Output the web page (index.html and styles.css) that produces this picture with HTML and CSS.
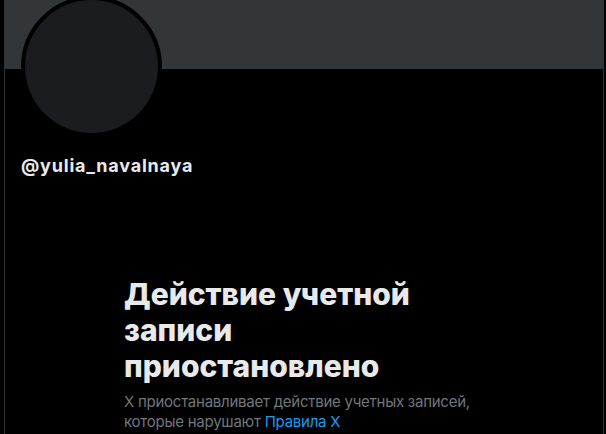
FILE: index.html
```html
<!DOCTYPE html>
<html lang="ru">
<head>
<meta charset="utf-8">
<link rel="stylesheet" href="styles.css">
</head>
<body>
<main class="column">
  <div class="banner"></div>
  <div class="profile">
    <div class="avatar"><div class="avatar-inner"></div></div>
    <div class="handle">@yulia_navalnaya</div>
  </div>
  <section class="empty">
    <h1 class="empty-title">Действие учетной записи приостановлено</h1>
    <p class="empty-text">X приостанавливает действие учетных записей, которые нарушают <a class="link" href="#">Правила X</a></p>
  </section>
</main>
</body>
</html>
```

FILE: styles.css
```css
html, body {
  margin: 0;
  padding: 0;
  background: #000;
  height: 100%;
  overflow: hidden;
}
body {
  font-family: Inter, "Noto Sans", "Liberation Sans", sans-serif;
  color: #e7e9ea;
}
.column {
  margin-left: 4px;
  width: 598px;
  min-height: 434px;
  border-left: 1px solid #2f3336;
  border-right: 1px solid #2f3336;
}
.banner {
  height: 69px;
  background: #333639;
}
.profile {
  padding: 0 16px;
}
.avatar {
  width: 141px;
  height: 141px;
  margin-top: -73px;
  box-sizing: border-box;
  border: 4px solid #000;
  border-radius: 50%;
  background: #000;
}
.avatar-inner {
  width: 100%;
  height: 100%;
  border-radius: 50%;
  background: #1b1c1f;
}
.handle {
  margin-top: 19px;
  font-size: 18px;
  line-height: 20px;
  font-weight: 700;
  letter-spacing: 0.8px;
  color: #e7e9ea;
}
.empty {
  width: 360px;
  margin: 100px auto 0;
}
.empty-title {
  margin: 0 0 8px;
  font-size: 30px;
  line-height: 36px;
  font-weight: 800;
  color: #e7e9ea;
}
.empty-text {
  margin: 0;
  font-size: 15px;
  line-height: 20px;
  letter-spacing: -0.25px;
  color: #71767b;
}
.link {
  color: #1d9bf0;
  text-decoration: none;
}
```
